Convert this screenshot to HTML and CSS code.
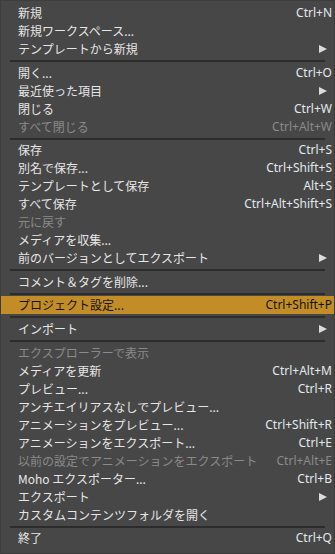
FILE: index.html
```html
<!DOCTYPE html>
<html lang="ja">
<head>
    <meta charset="UTF-8">
    <title>ファイル メニュー</title>
    <link rel="stylesheet" href="styles.css">
</head>
<body>
    <!-- === FILE MENU === -->
    <div class="menu">
        <div class="item"><span>新規</span><span class="key">Ctrl+N</span></div>
        <div class="item"><span>新規ワークスペース...</span></div>
        <div class="item"><span>テンプレートから新規</span><span class="sub"></span></div>
        <div class="sep"></div>

        <div class="item"><span>開く...</span><span class="key">Ctrl+O</span></div>
        <div class="item"><span>最近使った項目</span><span class="sub"></span></div>
        <div class="item"><span>閉じる</span><span class="key">Ctrl+W</span></div>
        <div class="item disabled"><span>すべて閉じる</span><span class="key">Ctrl+Alt+W</span></div>
        <div class="sep"></div>

        <div class="item"><span>保存</span><span class="key">Ctrl+S</span></div>
        <div class="item"><span>別名で保存...</span><span class="key">Ctrl+Shift+S</span></div>
        <div class="item"><span>テンプレートとして保存</span><span class="key">Alt+S</span></div>
        <div class="item"><span>すべて保存</span><span class="key">Ctrl+Alt+Shift+S</span></div>
        <div class="item disabled"><span>元に戻す</span></div>
        <div class="item"><span>メディアを収集...</span></div>
        <div class="item"><span>前のバージョンとしてエクスポート</span><span class="sub"></span></div>
        <div class="sep"></div>

        <div class="item"><span>コメント＆タグを削除...</span></div>
        <div class="sep"></div>

        <div class="item active"><span>プロジェクト設定...</span><span class="key">Ctrl+Shift+P</span></div>
        <div class="sep"></div>

        <div class="item"><span>インポート</span><span class="sub"></span></div>
        <div class="sep"></div>

        <div class="item disabled"><span>エクスプローラーで表示</span></div>
        <div class="item"><span>メディアを更新</span><span class="key">Ctrl+Alt+M</span></div>
        <div class="item"><span>プレビュー...</span><span class="key">Ctrl+R</span></div>
        <div class="item"><span>アンチエイリアスなしでプレビュー...</span></div>
        <div class="item"><span>アニメーションをプレビュー...</span><span class="key">Ctrl+Shift+R</span></div>
        <div class="item"><span>アニメーションをエクスポート...</span><span class="key">Ctrl+E</span></div>
        <div class="item disabled"><span>以前の設定でアニメーションをエクスポート</span><span class="key">Ctrl+Alt+E</span></div>
        <div class="item"><span>Moho エクスポーター...</span><span class="key">Ctrl+B</span></div>
        <div class="item"><span>エクスポート</span><span class="sub"></span></div>
        <div class="item"><span>カスタムコンテンツフォルダを開く</span></div>
        <div class="sep"></div>

        <div class="item"><span>終了</span><span class="key">Ctrl+Q</span></div>
    </div>
</body>
</html>
```

FILE: styles.css
```css
/* === BASE === */
* {
    margin: 0;
    padding: 0;
    box-sizing: border-box;
}

body {
    background: #474747;
    font-family: "Noto Sans CJK JP", "Noto Sans", sans-serif;
    font-size: 12px;
    color: #e6e6e6;
}

/* === MENU === */
.menu {
    width: 335px;
    height: 554px;
    background: #474747;
    border: 1px solid #3d3d3d;
    padding-top: 3px;
}

.item {
    display: flex;
    justify-content: space-between;
    align-items: center;
    height: 18px;
    line-height: 18px;
    padding: 0 2px 0 17px;
    white-space: nowrap;
}

.key {
    font-family: "Noto Sans", sans-serif;
    color: #e2e8ee;
}

/* submenu arrow */
.sub {
    width: 0;
    height: 0;
    margin-right: 5px;
    border-top: 4.5px solid transparent;
    border-bottom: 4.5px solid transparent;
    border-left: 8px solid #dcdcdc;
}

.item.disabled,
.item.disabled .key {
    color: #8a8a8a;
}

.item.active {
    background: #c28c27;
    color: #151515;
}

.item.active .key {
    color: #151515;
}

.sep {
    height: 2px;
    margin: 2px 9px 1.6px 9px;
    background: #2c2c2c;
}
```
